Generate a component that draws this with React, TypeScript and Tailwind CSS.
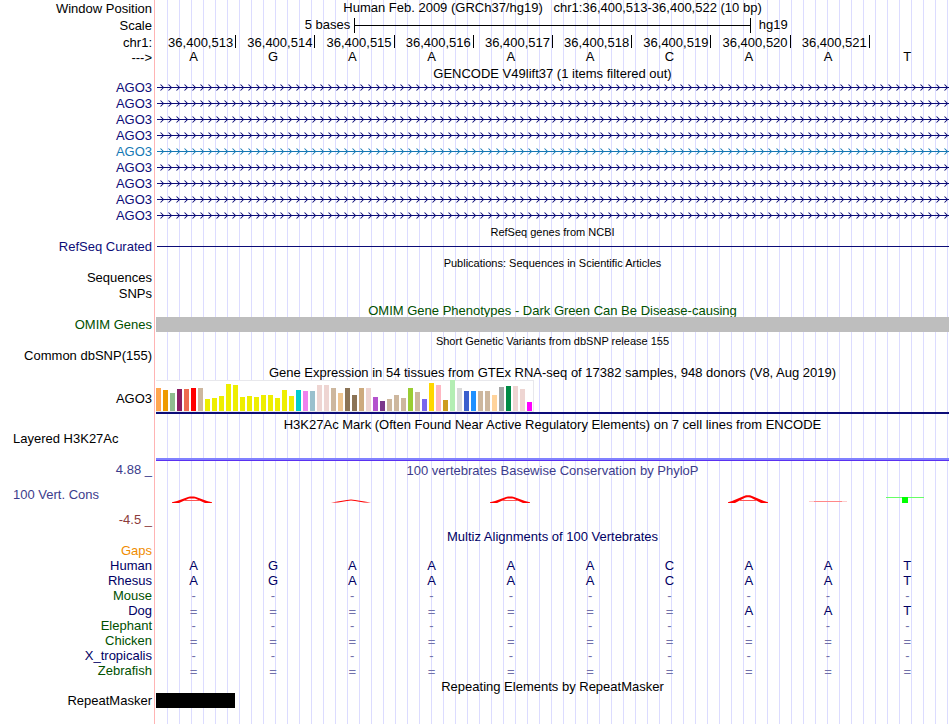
import type { ReactNode } from "react";

const NAVY = "text-[#0c0c78]";
const GREEN = "text-[#005000]";
const ALIGN_NAVY = "text-[#000064]";

const POSITIONS = [
  "36,400,513", "36,400,514", "36,400,515", "36,400,516", "36,400,517",
  "36,400,518", "36,400,519", "36,400,520", "36,400,521",
];

const SEQUENCE = "AGAAAACAAT";

const TRANSCRIPTS = [0, 1, 2, 3, 4, 5, 6, 7, 8];

const ALIGNMENTS = [
  { species: "Human", bases: "AGAAAACAAT", tone: ALIGN_NAVY },
  { species: "Rhesus", bases: "AGAAAACAAT", tone: ALIGN_NAVY },
  { species: "Mouse", bases: "----------", tone: GREEN },
  { species: "Dog", bases: "=======AAT", tone: ALIGN_NAVY },
  { species: "Elephant", bases: "----------", tone: GREEN },
  { species: "Chicken", bases: "==========", tone: GREEN },
  { species: "X_tropicalis", bases: "----------", tone: ALIGN_NAVY },
  { species: "Zebrafish", bases: "==========", tone: GREEN },
];

// One entry per GTEx tissue: colour and bar height in pixels.
const TISSUES: [string, number][] = [
  ["#ffa54f", 23], ["#ee9a00", 21], ["#8fbc8f", 18], ["#8b1c62", 22], ["#ee6a50", 22],
  ["#ff0000", 23], ["#cdb79e", 23], ["#eeee00", 12], ["#eeee00", 13], ["#eeee00", 15],
  ["#eeee00", 27], ["#eeee00", 26], ["#eeee00", 14], ["#eeee00", 15], ["#eeee00", 14],
  ["#eeee00", 16], ["#eeee00", 16], ["#eeee00", 13], ["#eeee00", 21], ["#eeee00", 15],
  ["#00cdcd", 21], ["#ee82ee", 20], ["#9ac0cd", 20], ["#eed5d2", 26], ["#eed5d2", 26],
  ["#cdb79e", 23], ["#eec591", 18], ["#8b7355", 23], ["#8b7355", 16], ["#cdaa7d", 23],
  ["#eed5d2", 23], ["#b452cd", 14], ["#7a378b", 10], ["#cdb79e", 12], ["#cdb79e", 16],
  ["#cdb79e", 13], ["#9acd32", 23], ["#cdb79e", 19], ["#7a67ee", 12], ["#ffd700", 28],
  ["#ffb6c1", 26], ["#cd9b1d", 11], ["#b4eeb4", 31], ["#d9d9d9", 23], ["#3a5fcd", 20],
  ["#1e90ff", 20], ["#cdb79e", 20], ["#cdb79e", 20], ["#ffd39b", 16], ["#a6a6a6", 24],
  ["#008b45", 25], ["#eed5d2", 25], ["#eed5d2", 22], ["#ff00ff", 9],
];

function Row({
  label,
  height,
  labelClass = "",
  children,
}: {
  label?: ReactNode;
  height: string;
  labelClass?: string;
  children?: ReactNode;
}) {
  return (
    <div className={`flex ${height}`}>
      <div className={`w-[154px] shrink-0 pr-0.5 text-right whitespace-nowrap ${labelClass}`}>{label}</div>
      <div className="ml-0.5 min-w-0 flex-1">{children}</div>
    </div>
  );
}

function Title({ children, height = "h-[15px]", className = "" }: { children: ReactNode; height?: string; className?: string }) {
  return (
    <Row height={height}>
      <h2 className={`text-center whitespace-pre ${className}`}>{children}</h2>
    </Row>
  );
}

function baseClass(base: string, tone: string) {
  if (base === "=") return "pt-px text-[#7070aa]";
  if (base === "-") return "text-[#7070aa]";
  return tone;
}

function Bases({ bases, tone }: { bases: string; tone: string }) {
  return (
    <div className="-ml-0.5 grid grid-cols-10 pr-0.5 text-center">
      {bases.split("").map((base, i) => (
        <span key={i} className={baseClass(base, tone)}>
          {base}
        </span>
      ))}
    </div>
  );
}

function Intron({ color, id }: { color: string; id: string }) {
  return (
    <div className="pl-px">
      <svg className="block h-[15px] w-full" aria-hidden="true">
        <defs>
          <pattern id={id} width="8" height="15" patternUnits="userSpaceOnUse">
            <path d="M3.5 4.5 L6.5 7.5 L3.5 10.5" fill="none" stroke={color} strokeWidth="1.05" />
          </pattern>
        </defs>
        <rect width="100%" height="15" fill={`url(#${id})`} />
        <rect y="7" width="100%" height="1" fill={color} />
      </svg>
    </div>
  );
}

function Expression() {
  return (
    <div>
      <div className="flex h-8 w-[378px] items-end gap-0.5 border-t border-r border-b border-[#e8e8ec] bg-white">
        {TISSUES.map(([color, height], i) => (
          <div key={i} className="w-[5px] shrink-0" style={{ height, backgroundColor: color }} />
        ))}
      </div>
      <div className="h-0.5 bg-[#0c0c78]" />
    </div>
  );
}

const PEAK = "M0 24 L0 23.2 L5 22 L16 18 L18 17.4 L22 17.4 L24 18 L35 22 L40 23.2 L40 24 L33 24 L23 19.6 L17 19.6 L7 24 Z";
const TALL_PEAK = "M0 24 L0 23.2 L4 22 L16 17 L18 16.2 L22 16.2 L24 17 L36 22 L40 23.2 L40 24 L33 24 L23 18.8 L21 18.2 L19 18.2 L17 18.8 L7 24 Z";
const LOW_PEAK = "M0 23.8 L5 22.8 L16 21 L20 20.4 L24 21 L35 22.8 L40 23.8 L33 23.4 L24 22 L20 21.4 L16 22 L7 23.4 Z";

function Score({ kind }: { kind: string }) {
  return (
    <svg className="mx-auto block h-10 w-10 overflow-visible" viewBox="0 0 40 40" aria-hidden="true">
      {kind === "peak" && <path d={PEAK} fill="#f00" />}
      {kind === "tall" && <path d={TALL_PEAK} fill="#f00" />}
      {kind === "low" && <path d={LOW_PEAK} fill="#f00" />}
      {(kind === "peak" || kind === "tall") && <rect x="12" y="21" width="16" height="1" fill="#f55" />}
      {kind === "flat" && (
        <>
          <rect x="1" y="22" width="38" height="1" fill="#fcc" />
          <rect x="6" y="22" width="28" height="1" fill="#f88" />
        </>
      )}
      {kind === "negative" && (
        <>
          <rect x="-1" y="18" width="38" height="1" fill="#6f6" />
          <rect x="15" y="18" width="6" height="6" fill="#0f0" />
        </>
      )}
    </svg>
  );
}

const SCORES = ["peak", "", "low", "", "peak", "", "", "tall", "flat", "negative"];

export default function App() {
  return (
    <main className="relative min-h-screen overflow-hidden bg-white pr-px font-['Liberation_Sans',Arial,sans-serif] text-[13px] leading-4 text-black">
      <div className="absolute inset-y-0 right-0 left-[154px] border-l border-[#ffb4b4]">
        <div className="ml-px h-full bg-[repeating-linear-gradient(to_right,transparent_0_11px,#dcdcff_11px_12px)]" />
      </div>

      <div className="relative">
        <Row height="h-[17px]" label="Window Position" labelClass="pt-px">
          <h1 className="text-center whitespace-pre">Human Feb. 2009 (GRCh37/hg19)   chr1:36,400,513-36,400,522 (10 bp)</h1>
        </Row>
        <Row height="h-[17px]" label="Scale" labelClass="pt-px">
          <div className="flex">
            <span className="w-1/4 pr-1 text-right">5 bases</span>
            <div className="mt-px flex h-[15px] w-1/2 items-center border-x border-black">
              <div className="h-px w-full bg-black" />
            </div>
            <span className="pl-2">hg19</span>
          </div>
        </Row>
        <Row height="h-[15px]" label="chr1:" labelClass="pt-px">
          <div className="ml-px grid grid-cols-10 pt-px text-right">
            {POSITIONS.map((position) => (
              <div key={position} className="h-[13px] border-r border-black pr-0.5">
                {position}
              </div>
            ))}
          </div>
        </Row>
        <Row height="h-[17px]" label="--->" labelClass="pt-px">
          <Bases bases={SEQUENCE} tone="text-black" />
        </Row>

        <Title height="h-[14px]">GENCODE V49lift37 (1 items filtered out)</Title>
        {TRANSCRIPTS.map((i) => (
          <Row key={i} height="h-4" label="AGO3" labelClass={i === 4 ? "text-[#1478b4]" : NAVY}>
            <Intron id={`intron-${i}`} color={i === 4 ? "#1478b4" : "#0c0c78"} />
          </Row>
        ))}

        <Title className="text-[11px]">RefSeq genes from NCBI</Title>
        <Row height="h-4" label="RefSeq Curated" labelClass={NAVY}>
          <div className="ml-px pt-[7px]">
            <div className="h-px bg-[#0c0c78]" />
          </div>
        </Row>

        <Title className="text-[11px]">Publications: Sequences in Scientific Articles</Title>
        <Row height="h-4" label="Sequences" />
        <Row height="h-4" label="SNPs" />

        <Title className={`pt-px ${GREEN}`}>OMIM Gene Phenotypes - Dark Green Can Be Disease-causing</Title>
        <Row height="h-4" label="OMIM Genes" labelClass={GREEN}>
          <div className="h-[15px] bg-[#bebebe]" />
        </Row>

        <Title className="text-[11px]">Short Genetic Variants from dbSNP release 155</Title>
        <Row height="h-4" label="Common dbSNP(155)" />

        <Title height="h-4" className="pt-px">
          Gene Expression in 54 tissues from GTEx RNA-seq of 17382 samples, 948 donors (V8, Aug 2019)
        </Title>
        <Row height="h-[37px]" label="AGO3" labelClass="pt-[11px]">
          <Expression />
        </Row>

        <Title height="h-[14px]">H3K27Ac Mark (Often Found Near Active Regulatory Elements) on 7 cell lines from ENCODE</Title>
        <Row height="h-8" label={<div className="pl-[13px] text-left">Layered H3K27Ac</div>}>
          <div className="pt-[27px]">
            <div className="h-[3px] border-b border-[#5a32f0] bg-[#8080ff]" />
          </div>
        </Row>

        <Row
          height="h-[66px]"
          labelClass="text-[#3c3c8c]"
          label={
            <div className="-mt-px flex flex-col gap-[9px]">
              <span>4.88 _</span>
              <span className="pl-[13px] text-left">100 Vert. Cons</span>
              <span className="text-[#8c3c3c]">-4.5 _</span>
            </div>
          }
        >
          <h2 className="text-center text-[#3c3c8c]">100 vertebrates Basewise Conservation by PhyloP</h2>
          <div className="-ml-1 grid grid-cols-10 pr-0.5">
            {SCORES.map((kind, i) => (
              <Score key={i} kind={kind} />
            ))}
          </div>
        </Row>

        <Title height="h-[14px]" className={ALIGN_NAVY}>Multiz Alignments of 100 Vertebrates</Title>
        <Row height="h-[15px]" label="Gaps" labelClass="text-[#f08c00]" />
        {ALIGNMENTS.map(({ species, bases, tone }) => (
          <Row key={species} height="h-[15px]" label={species} labelClass={tone}>
            <Bases bases={bases} tone={tone} />
          </Row>
        ))}

        <Title className="pt-px">Repeating Elements by RepeatMasker</Title>
        <Row height="h-4" label="RepeatMasker">
          <div className="h-[15px] w-1/10 bg-black" />
        </Row>
      </div>
    </main>
  );
}
